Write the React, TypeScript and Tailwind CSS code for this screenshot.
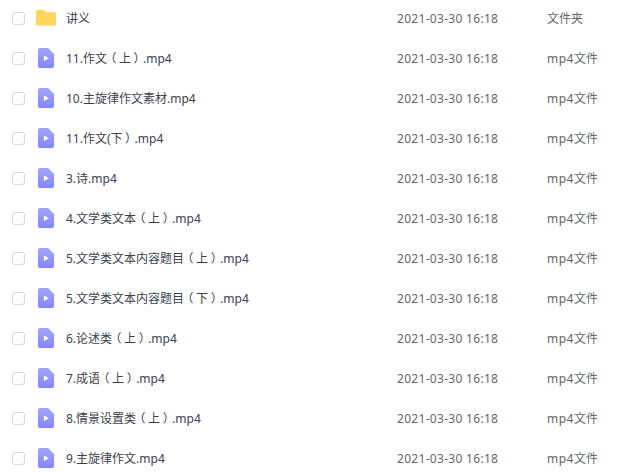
const rows: [string, string][] = [
  ["讲义", "文件夹"],
  ["11.作文（上）.mp4", "mp4文件"],
  ["10.主旋律作文素材.mp4", "mp4文件"],
  ["11.作文(下）.mp4", "mp4文件"],
  ["3.诗.mp4", "mp4文件"],
  ["4.文学类文本（上）.mp4", "mp4文件"],
  ["5.文学类文本内容题目（上）.mp4", "mp4文件"],
  ["5.文学类文本内容题目（下）.mp4", "mp4文件"],
  ["6.论述类（上）.mp4", "mp4文件"],
  ["7.成语（上）.mp4", "mp4文件"],
  ["8.情景设置类（上）.mp4", "mp4文件"],
  ["9.主旋律作文.mp4", "mp4文件"],
];

function FolderIcon() {
  return (
    <svg width="20" height="16" viewBox="0 0 20 16">
      <path d="M1.5 0H7c.8 0 1.200.3 1.700.9L10 2.300h8.500c.9 0 1.500.6 1.500 1.500v10.200c0 .9-.6 1.500-1.500 1.500h-17C.6 15.500 0 14.900 0 14V1.500C0 .6.6 0 1.500 0Z" fill="#ffd659" />
    </svg>
  );
}

function VideoIcon() {
  return (
    <svg width="16" height="20" viewBox="0 0 16 20">
      <defs>
        <linearGradient id="vid" x1="0" y1="0" x2="0" y2="1">
          <stop offset="0" stopColor="#a3a6fb" />
          <stop offset="1" stopColor="#8584fd" />
        </linearGradient>
      </defs>
      <path d="M2 0H10L16 6V18C16 19.200 15.200 20 14 20H2C.8 20 0 19.200 0 18V2C0 .8.8 0 2 0Z" fill="url(#vid)" />
      <path d="M6 7.500 11 10.200 6 13Z" fill="#fff" />
    </svg>
  );
}

function Name({ text }: { text: string }) {
  const parts = text.split(/([（）])/);
  return (
    <>
      {parts.map((p, i) =>
        p === "（" || p === "）" ? (
          <span key={i} className="px-[3px] [font-feature-settings:'palt']">{p}</span>
        ) : (
          <span key={i}>{p}</span>
        ),
      )}
    </>
  );
}

export default function App() {
  return (
    <div className="h-[473px] w-[640px] overflow-hidden bg-white font-['Noto_Sans','Noto_Sans_CJK_SC',sans-serif] text-[12px]">
      <div className="-mt-[2px] flex flex-col">
        {rows.map(([name, type], i) => (
          <div key={i} className="flex h-10 items-center">
            <div className="ml-3 mt-[1px] h-[13px] w-[13px] rounded-[3px] border border-[#d9d9d9] bg-white" />
            <div className="ml-[11px] flex w-[20px] justify-center">{i === 0 ? <FolderIcon /> : <VideoIcon />}</div>
            <div className="ml-[10px] w-[331px] pt-[2px] text-[#3c4150]"><Name text={name} /></div>
            <div className="w-[150px] pt-[2px] tracking-[0.3px] text-[#666]">2021-03-30 16:18</div>
            <div className="pt-[2px] text-[#666]">
              {type === "mp4文件" ? (
                <>
                  <span className="tracking-[0.5px]">mp4</span>文件
                </>
              ) : (
                type
              )}
            </div>
          </div>
        ))}
      </div>
    </div>
  );
}
